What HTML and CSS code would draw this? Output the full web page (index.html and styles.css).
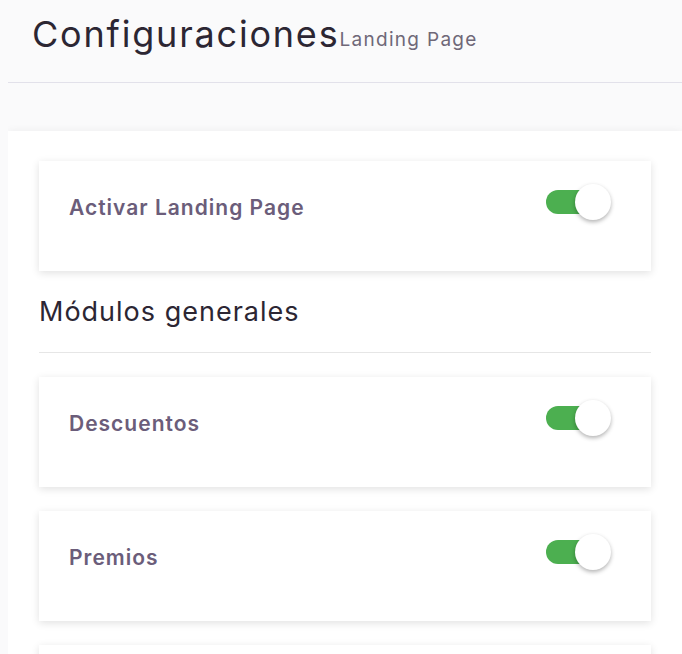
FILE: index.html
```html
<!DOCTYPE html>
<html lang="es">
<head>
  <meta charset="UTF-8" />
  <meta name="viewport" content="width=device-width, initial-scale=1" />
  <title>Configuraciones - Landing Page</title>
  <link rel="stylesheet" href="styles.css">
</head>
<body>
  <header class="page-header">
    <h1>Configuraciones<small>Landing Page</small></h1>
  </header>

  <main class="panel">
    <div class="setting-card">
      <span class="setting-label">Activar Landing Page</span>
      <label class="switch"><input type="checkbox" checked><span class="slider"></span></label>
    </div>

    <h2 class="section-title">Módulos generales</h2>

    <div class="setting-card">
      <span class="setting-label">Descuentos</span>
      <label class="switch"><input type="checkbox" checked><span class="slider"></span></label>
    </div>

    <div class="setting-card">
      <span class="setting-label">Premios</span>
      <label class="switch"><input type="checkbox" checked><span class="slider"></span></label>
    </div>

    <div class="setting-card">
      <span class="setting-label">Sorteos</span>
      <label class="switch"><input type="checkbox" checked><span class="slider"></span></label>
    </div>
  </main>
</body>
</html>
```

FILE: styles.css
```css
/* Settings page */
body {
  margin: 0 0 0 8px;
  font-family: Inter, 'Noto Sans', sans-serif;
  background: #fafafb;
  color: #2c2633;
  overflow: hidden;
}

.page-header {
  border-bottom: 1px solid #e2e1ea;
  padding: 12px 24px 0 24px;
  height: 70px;
}

.page-header h1 {
  margin: 0;
  font-size: 36px;
  font-weight: 400;
  color: #2c2633;
  letter-spacing: 1.8px;
}

.page-header small {
  font-size: 19px;
  color: #6f6878;
  letter-spacing: 1.3px;
  vertical-align: 1px;
}

.panel {
  margin-top: 48px;
  background: #fff;
  padding: 30px 31px;
  box-shadow: 0 0 8px rgba(0,0,0,0.06);
  min-height: 600px;
}

.setting-card {
  background: #fff;
  height: 110px;
  box-sizing: border-box;
  padding: 23px 40px 0 30px;
  display: flex;
  justify-content: space-between;
  align-items: flex-start;
  box-shadow: 0 2px 8px rgba(0,0,0,0.12);
  margin-bottom: 24px;
}

.setting-label {
  margin-top: 11px;
  font-size: 21px;
  font-weight: 600;
  color: #6b5d7a;
  letter-spacing: 1px;
}

.section-title {
  margin: 0 0 24px 0;
  padding-bottom: 24px;
  border-bottom: 1px solid #e6e6e6;
  font-size: 27px;
  font-weight: 400;
  color: #2c2633;
  letter-spacing: 1px;
}

/* Toggle switch */
.switch {
  position: relative;
  display: inline-block;
  width: 65px;
  height: 36px;
}

.switch input {
  display: none;
}

.slider {
  position: absolute;
  left: 0;
  top: 6px;
  width: 54px;
  height: 24px;
  border-radius: 12px;
  background: #4caf50;
}

.slider::before {
  content: "";
  position: absolute;
  left: 29px;
  top: -6px;
  width: 36px;
  height: 36px;
  border-radius: 50%;
  background: #fff;
  box-shadow: 0 2px 4px rgba(0,0,0,0.3);
}
```
